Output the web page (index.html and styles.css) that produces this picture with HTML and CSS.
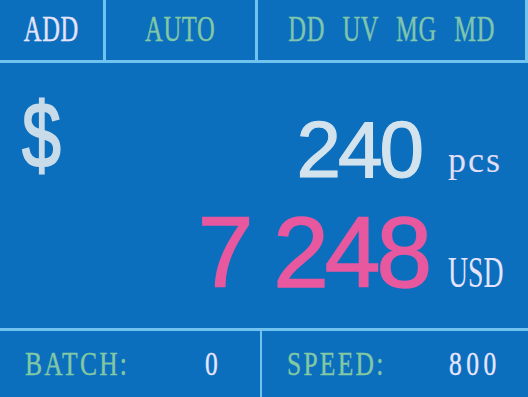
FILE: index.html
```html
<!DOCTYPE html>
<html>
<head>
<meta charset="utf-8">
<link rel="stylesheet" href="styles.css">
</head>
<body>
<div class="screen">
  <div class="topbar">
    <div class="cell cell-add"><span class="lcd lcd-top add">ADD</span></div>
    <div class="cell cell-auto"><span class="lcd lcd-top green">AUTO</span></div>
    <div class="cell cell-det"><span class="lcd lcd-top green det">DD UV MG MD</span></div>
  </div>
  <div class="main">
    <div class="currency"><span class="dollar">$</span></div>
    <div class="values">
      <div class="row row-count">
        <span class="num count">240</span>
        <div class="unit"><span class="pcs">pcs</span></div>
      </div>
      <div class="row row-sum">
        <span class="num sum">7 248</span>
        <div class="unit"><span class="usd">USD</span></div>
      </div>
    </div>
  </div>
  <div class="bottombar">
    <div class="bcell bcell-left">
      <span class="lcd lcd-bot green label label-batch">BATCH:</span>
      <span class="lcd lcd-bot val">0</span>
    </div>
    <div class="bcell bcell-right">
      <span class="lcd lcd-bot green label label-speed">SPEED:</span>
      <span class="lcd lcd-bot val">800</span>
    </div>
  </div>
</div>
</body>
</html>
```

FILE: styles.css
```css
html, body {
  margin: 0;
  padding: 0;
  background: #0c6fbd;
}

.screen {
  width: 528px;
  height: 397px;
  display: flex;
  flex-direction: column;
  background: #0c6fbd;
  overflow: hidden;
}

/* ---------- top bar ---------- */
.topbar {
  height: 60px;
  display: flex;
  border-bottom: 3px solid #6fc3ee;
  border-right: 3px solid #6fc3ee;
}

.cell {
  display: flex;
  align-items: center;
  justify-content: center;
  height: 60px;
  flex-shrink: 0;
  overflow: visible;
}

.cell-add {
  width: 103px;
  border-right: 3px solid #6fc3ee;
}

.cell-auto {
  width: 149px;
  border-right: 3px solid #6fc3ee;
}

.cell-det {
  flex: 1 1 0;
  min-width: 0;
}

.lcd {
  font-family: "Liberation Serif", "Times New Roman", serif;
  display: inline-block;
  white-space: pre;
}

.lcd-top {
  font-size: 35px;
  line-height: 60px;
  letter-spacing: 1px;
  transform: scaleX(0.7);
  transform-origin: center;
  flex-shrink: 0;
  -webkit-text-stroke: 0.4px currentColor;
}

.add {
  color: #e6e4fb;
}

.green {
  color: #82c8a4;
}

.det {
  word-spacing: 15px;
  color: #7fc5ae;
}

/* ---------- main area ---------- */
.main {
  flex: 1;
  display: flex;
}

.currency {
  padding-top: 26px;
  padding-left: 22px;
  width: 60px;
}

.dollar {
  display: inline-block;
  font-family: "Liberation Sans", Arial, sans-serif;
  font-size: 92px;
  line-height: 92px;
  color: #c8dbe8;
  transform: scaleX(0.76);
  transform-origin: left;
  -webkit-text-stroke: 2px #c8dbe8;
}

.values {
  flex: 1;
  display: flex;
  flex-direction: column;
  padding-top: 47px;
}

.row {
  display: flex;
  justify-content: flex-end;
  align-items: baseline;
}

.num {
  font-family: "Liberation Sans", Arial, sans-serif;
}

.count {
  font-size: 80px;
  line-height: 80px;
  letter-spacing: -3px;
  color: #d3e3ee;
  margin-right: 27px;
  -webkit-text-stroke: 1.2px #d3e3ee;
}

.row-sum {
  margin-top: 12px;
}

.sum {
  font-size: 100px;
  line-height: 100px;
  letter-spacing: -4px;
  color: #e8589f;
  margin-right: 20px;
  -webkit-text-stroke: 1.5px #e8589f;
}

.unit {
  width: 80px;
  font-family: "Liberation Serif", "Times New Roman", serif;
}

.pcs {
  display: inline-block;
  font-size: 36px;
  letter-spacing: 2px;
  color: #e2def6;
  vertical-align: 5px;
}

.usd {
  display: inline-block;
  font-size: 44px;
  color: #e4e4ff;
  transform: scaleX(0.63);
  transform-origin: left;
}

/* ---------- bottom bar ---------- */
.bottombar {
  height: 66px;
  display: flex;
  border-top: 3px solid #6fc3ee;
}

.bcell {
  display: flex;
  align-items: center;
  padding-left: 25px;
}

.bcell-left {
  width: 235px;
  border-right: 2px solid #6fc3ee;
}

.bcell-right {
  flex: 1;
}

.lcd-bot {
  font-size: 34px;
  line-height: 66px;
  letter-spacing: 3px;
  transform: scaleX(0.75);
  transform-origin: left;
  -webkit-text-stroke: 0.4px currentColor;
}

.label-batch {
  width: 180px;
}

.label-speed {
  width: 162px;
}

.val {
  color: #e8e6ff;
  letter-spacing: 6px;
}
```
